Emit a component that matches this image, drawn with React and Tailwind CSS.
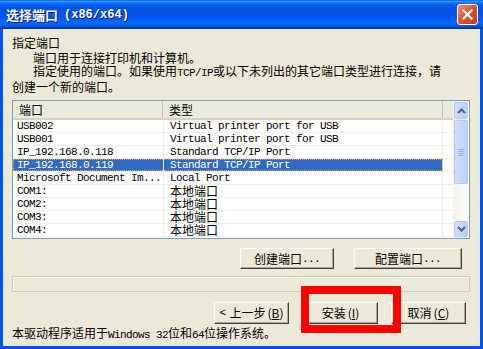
import React from 'react';

const cjk = "font-['Noto_Sans_CJK_SC',sans-serif]";
const mono = "font-['Liberation_Mono','Noto_Sans_CJK_SC',monospace] text-[11px] tracking-[-0.6px]";

const rows = [
  { port: 'USB002', type: 'Virtual printer port for USB' },
  { port: 'USB001', type: 'Virtual printer port for USB' },
  { port: 'IP_192.168.0.118', type: 'Standard TCP/IP Port' },
  { port: 'IP_192.168.0.119', type: 'Standard TCP/IP Port', selected: true },
  { port: 'Microsoft Document Im...', type: 'Local Port' },
  { port: 'COM1:', type: '本地端口', local: true },
  { port: 'COM2:', type: '本地端口', local: true },
  { port: 'COM3:', type: '本地端口', local: true },
  { port: 'COM4:', type: '本地端口', local: true },
];

function M({ children }) {
  return <span className={mono}>{children}</span>;
}

function Button({ width, children }) {
  return (
    <div
      className={`flex h-full items-center justify-center border-t border-l border-white border-r border-b border-r-[#404040] border-b-[#404040] bg-[#ece9d8] text-[12px] leading-[14px] text-black shadow-[inset_-1px_-1px_0_#aca899] ${width}`}
    >
      {children}
    </div>
  );
}

function Arrow({ up }) {
  return (
    <svg width="9" height="6" viewBox="0 0 9 6">
      <polyline
        points={up ? '1,5 4.5,1.5 8,5' : '1,1 4.5,4.5 8,1'}
        fill="none"
        stroke="#4d6185"
        strokeWidth="2"
      />
    </svg>
  );
}

function ScrollBar() {
  return (
    <div className="flex w-[16px] flex-col bg-[linear-gradient(to_right,#f3f1ec,#fefefb)]">
      <div className="mx-[1px] mt-[1px] flex h-[17px] items-center justify-center rounded-[2px] border border-[#b5c9f3] bg-[linear-gradient(to_right,#cfdffd,#b9d0fb)]">
        <Arrow up />
      </div>
      <div className="mx-[1px] mt-[1px] flex h-[64px] flex-col items-center justify-center gap-[1px] rounded-[2px] border border-[#b5c9f3] bg-[linear-gradient(to_right,#cfdffd,#bcd2fb)]">
        <div className="h-[1px] w-[6px] bg-[#8cb0f8]" />
        <div className="h-[1px] w-[6px] bg-[#8cb0f8]" />
        <div className="h-[1px] w-[6px] bg-[#8cb0f8]" />
        <div className="h-[1px] w-[6px] bg-[#8cb0f8]" />
      </div>
      <div className="flex-1" />
      <div className="mx-[1px] mb-[1px] flex h-[16px] items-center justify-center rounded-[2px] border border-[#b5c9f3] bg-[linear-gradient(to_right,#cfdffd,#b9d0fb)]">
        <Arrow />
      </div>
    </div>
  );
}

function PortList() {
  return (
    <div className="mt-[7px] flex h-[139px] overflow-hidden border border-[#7f9db9] bg-white">
      <div className="flex-1">
        <div className="flex h-[19px] border-b-2 border-[#d6d2c2] bg-[#ebeadb] text-[12px] leading-[14px]">
          <div className="flex w-[150px] items-center border-r border-[#c7c5b2] pl-[6px]">端口</div>
          <div className="flex w-[280px] items-center border-r border-[#c7c5b2] pl-[6px]">类型</div>
          <div className="flex-1" />
        </div>
        {rows.map((r, i) => (
          <div key={i} className="flex h-[13px] border-b border-[#efeee4]">
            <div
              className={`flex w-[430px] ${
                r.selected
                  ? 'bg-[#316ac5] text-white outline outline-1 -outline-offset-1 outline-dotted outline-[#e8a040]'
                  : 'text-black'
              }`}
            >
              <div className="flex w-[151px] items-center overflow-hidden whitespace-nowrap border-r border-[#efeee4] pl-[4px] leading-[12px]">
                <M>{r.port}</M>
              </div>
              <div className="flex flex-1 items-center whitespace-nowrap border-r border-[#efeee4] pl-[6px] leading-[12px]">
                {r.local ? <span className="text-[12px] leading-[12px]">{r.type}</span> : <M>{r.type}</M>}
              </div>
            </div>
            <div className="flex-1" />
          </div>
        ))}
      </div>
      <ScrollBar />
    </div>
  );
}

export default function App() {
  return (
    <div className={`flex h-[349px] w-[483px] flex-col overflow-hidden bg-[#0055ea] ${cjk} text-black`}>
      <div className="flex h-[29px] items-center justify-between bg-[linear-gradient(to_bottom,#0058ee_0%,#3593ff_5%,#127dff_9%,#0262ee_14%,#0057e5_22%,#0054e3_30%,#0055eb_56%,#005bf5_66%,#026afe_76%,#0062ef_86%,#0052d6_92%,#0040ab_96%,#003092_100%)] pl-[6px] pr-[5px]">
        <div className="flex items-center whitespace-nowrap text-[13px] font-bold text-white [text-shadow:1px_1px_0_#0a1883]">
          选择端口
          <span className="ml-[6px] font-['Liberation_Mono',monospace] text-[12px]">(x86/x64)</span>
        </div>
        <div className="flex h-[21px] w-[21px] items-center justify-center rounded-[3px] border border-white bg-[linear-gradient(135deg,#e7907a,#d8512f_50%,#c23a24)]">
          <svg width="11" height="11" viewBox="0 0 11 11">
            <path d="M1.5 1.5 L9.5 9.5 M9.5 1.5 L1.5 9.5" stroke="white" strokeWidth="2.2" strokeLinecap="square" />
          </svg>
        </div>
      </div>

      <div className="relative mx-[3px] mb-[3px] flex flex-1 flex-col bg-[#ece9d8] pt-[6px] pl-[9px] pr-[10px]">
        <div className="text-[12px] leading-[16px]">指定端口</div>
        <div className="whitespace-nowrap pl-[21px] text-[12px] leading-[13px]">端口用于连接打印机和计算机。</div>
        <div className="whitespace-nowrap text-[12px] leading-[13px]">
          <span className="pl-[21px]">
            指定使用的端口。如果使用<M>TCP/IP</M>或以下未列出的其它端口类型进行连接，请
          </span>
          <br />
          创建一个新的端口。
        </div>

        <PortList />

        <div className="mt-[9px] flex h-[21px] justify-end gap-[20px] pr-[8px]">
          <Button width="w-[94px]">
            创建端口<M>...</M>
          </Button>
          <Button width="w-[108px]">
            配置端口<M>...</M>
          </Button>
        </div>

        <div className="mt-[7px] h-[16px] border border-[#cdcab9] bg-[#ece9d8] shadow-[inset_1px_1px_0_#f7f6f0]" />

        <div className="mt-[10px] flex h-[22px] justify-end pr-[4px]">
          <Button width="w-[75px]">
            <M>&lt;</M>
            <span className="ml-[4px]">上一步</span>
            <span className="ml-[2px]">(<u>B</u>)</span>
          </Button>
          <div className="ml-[14px] h-full">
            <Button width="w-[75px]">
              安装<span className="ml-[2px]">(<u>I</u>)</span>
            </Button>
          </div>
          <div className="ml-[13px] h-full">
            <Button width="w-[75px]">
              取消<span className="ml-[2px]">(<u>C</u>)</span>
            </Button>
          </div>
        </div>

        <div className="mt-[1px] whitespace-nowrap text-[12px] leading-[16px]">
          本驱动程序适用于<M>Windows 32</M>位和<M>64</M>位操作系统。
        </div>

        <div className="absolute left-[298px] top-[257px] h-[47px] w-[100px] border-8 border-[#ff0000]" />
      </div>
    </div>
  );
}
